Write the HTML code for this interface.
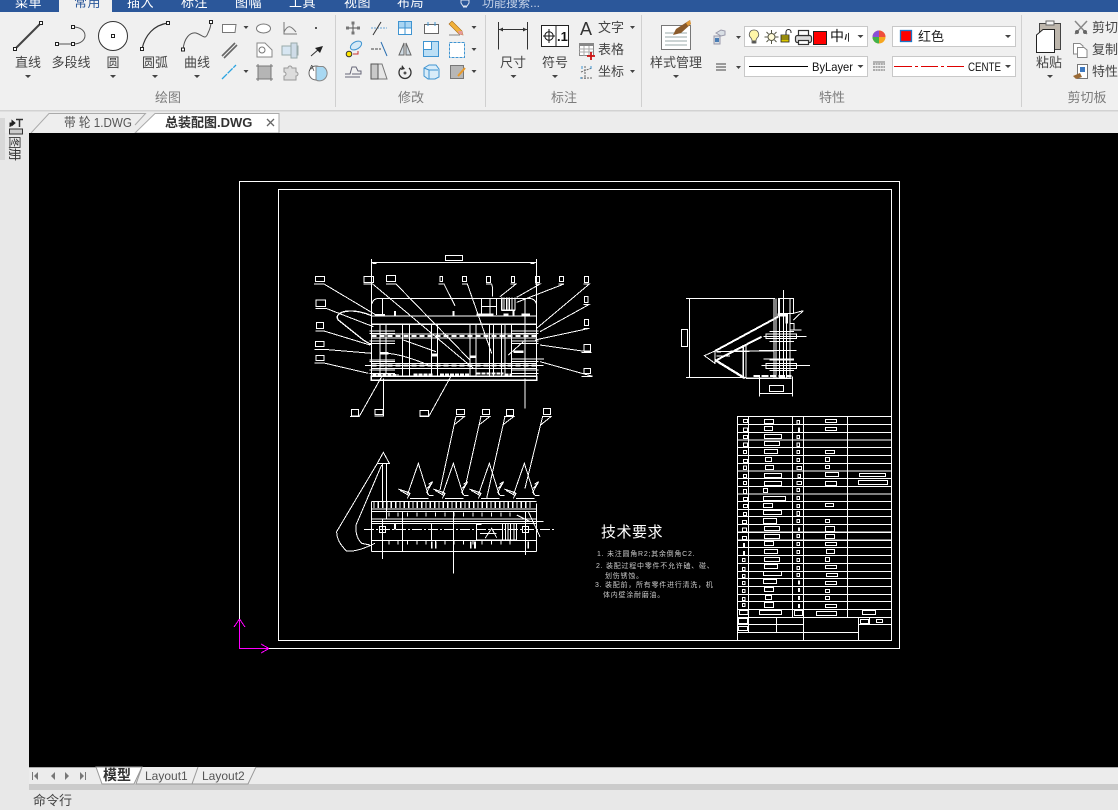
<!DOCTYPE html>
<html lang="zh">
<head>
<meta charset="utf-8">
<title>CAD</title>
<style>
html,body{margin:0;padding:0;width:1118px;height:810px;overflow:hidden;background:#f0f0f0}
svg{display:block}
text{font-family:"Liberation Sans","Noto Sans CJK SC",sans-serif;font-size:13px;fill:#444}
.m{text-anchor:middle}
.g{fill:#7c7c7c}
.w{fill:#fff}
.a{fill:#444;stroke:none}
.cad{fill:none;stroke:#fff;stroke-width:3;shape-rendering:crispEdges}
.ic{fill:none;stroke:#555;stroke-width:1}
.lb{fill:#fff;stroke:#666;stroke-width:1}
.tr text{font-size:7px;fill:#c9c9c9;letter-spacing:.75px}
</style>
</head>
<body>
<svg width="1118" height="810" viewBox="0 0 1118 810" xmlns="http://www.w3.org/2000/svg">
<defs>
<g id="cone"><path d="M262 270L295 175L325 270M235 252L270 265L262 280M235 252L265 262M270 280H325M338 230L320 262L328 272H340M325 238L338 230M240 256L268 272M322 250L334 236"/></g>
</defs>
<!-- backgrounds -->
<rect width="1118" height="810" fill="#e8e8e8"/>
<rect y="12" width="1118" height="98" fill="#f0f0f0"/>
<rect y="110" width="1118" height="1.500" fill="#d2d2d2"/>
<rect width="1118" height="12" fill="#2b579a"/>
<rect x="59" width="53" height="13" fill="#f0f0f0"/>
<!-- top tabs -->
<g font-size="13">
<text class="w" x="15" y="7" letter-spacing=".5">菜单</text>
<text x="74" y="7" letter-spacing=".5" style="fill:#2b579a">常用</text>
<text class="w" x="127" y="7" letter-spacing=".5">插入</text>
<text class="w" x="181" y="7" letter-spacing=".5">标注</text>
<text class="w" x="235" y="7" letter-spacing=".5">图幅</text>
<text class="w" x="289" y="7" letter-spacing=".5">工具</text>
<text class="w" x="344" y="7" letter-spacing=".5">视图</text>
<text class="w" x="397" y="7" letter-spacing=".5">布局</text>
<text x="482" y="7" style="fill:#c6d3e8;font-size:12px">功能搜索...</text>
</g>
<path d="M461 0h8v3l-2 3h-4l-2-3zM463 7h4" fill="none" stroke="#dfe6f2"/>
<!-- separators -->
<path d="M335.500 15V107M485.500 15V107M641.500 15V107M1021.500 15V107" stroke="#d0d0d0" fill="none"/>
<!-- group labels -->
<text class="m g" x="168" y="102">绘图</text>
<text class="m g" x="411" y="102">修改</text>
<text class="m g" x="564" y="102">标注</text>
<text class="m g" x="832" y="102">特性</text>
<text class="m g" x="1087" y="102">剪切板</text>
<!-- draw big labels -->
<text class="m" x="28" y="67">直线</text>
<text class="m" x="71" y="67">多段线</text>
<text class="m" x="113" y="67">圆</text>
<text class="m" x="155" y="67">圆弧</text>
<text class="m" x="197" y="67">曲线</text>
<path class="a" d="M25 75h6l-3 3zM110 75h6l-3 3zM152 75h6l-3 3zM194 75h6l-3 3zM243.500 26h5l-2.500 3zM243.500 70h5l-2.500 3z"/>
<!-- line -->
<path d="M15 49L41 23" stroke="#444" stroke-width="2" fill="none"/>
<path class="lb" style="stroke:#222" d="M13.500 47.500h3v3h-3zM39.500 21.500h3v3h-3z"/>
<!-- polyline -->
<path d="M57 44H73C89 44 89 27 73 27" fill="none" stroke="#555"/>
<path class="lb" style="stroke:#222" d="M55.500 42.500h3v3h-3zM71.500 42.500h3v3h-3zM71.500 25.500h3v3h-3z"/>
<!-- circle -->
<circle cx="113" cy="36" r="14.500" fill="#fff" stroke="#333"/>
<path class="lb" style="stroke:#222" d="M111.500 34.500h3v3h-3z"/>
<!-- arc -->
<path d="M142 49C145 35 154 25 168 23" fill="none" stroke="#333" stroke-width="1.200"/>
<path class="lb" style="stroke:#222" d="M140.500 47.500h3v3h-3zM166.500 21.500h3v3h-3z"/>
<!-- spline -->
<path d="M183 50C184 38 190 32 196 33C203 35 205 41 208 33C210 29 211 26 211 22" fill="none" stroke="#555"/>
<path class="lb" style="stroke:#222" d="M181.500 48h3v3h-3zM209.500 20.500h3v3h-3z"/>
<!-- draw small icons -->
<g class="ic">
<path d="M222.500 24.500H236L235 32.500H222.500Z" fill="#fff" stroke="#777"/>
<ellipse cx="263.500" cy="28.500" rx="7" ry="4.500" fill="#fff" stroke="#777"/>
<path d="M284 22V34H297M284 32C288 24 291 26 296 32" stroke="#777"/>
<path d="M222 56L235 43M224 58L237 45" stroke="#666" stroke-width="1.600"/>
<path d="M257 43H265L272 50V57H257Z" fill="#fff" stroke="#888"/><circle cx="262" cy="50" r="3" stroke="#777"/>
<path d="M282 46H298V55H282Z" fill="#d7e6f2" stroke="#9aa"/><path d="M291 43H297V58H291Z" fill="#cfdce8" stroke="#9aa"/>
<path d="M222 79L236 65" stroke="#2aa3e0" stroke-width="1.300" stroke-dasharray="7 1"/>
<rect x="258" y="66" width="13" height="13" fill="#b5b5b5" stroke="#777"/><path d="M256 66h17M256 79h17M258 64v17M271 64v17" stroke="#777"/>
<path d="M284 68h4a2 2 0 0 1 4 0h4v4a2 2 0 0 1 0 4v4h-12v-4a2 2 0 0 0 0-4z" fill="#dcdcdc" stroke="#999"/>
<circle cx="316" cy="73" r="7" fill="#fff" stroke="#666"/><path d="M316 73V66.500H323A7 7 0 0 1 316 80Z" fill="#a8d8f2" stroke="#888"/>
</g>
<rect x="315" y="27" width="2" height="2" fill="#555"/>
<path d="M311 56L319 49" stroke="#333"/><path d="M323 46L315 48L320 53Z" fill="#222"/>
<text x="309" y="71" style="font-size:8px">A</text>
<!-- modify icons -->
<g class="ic">
<path d="M353 22V34M347 28H359" stroke="#555"/><path d="M351.500 21.500h3v3h-3zM351.500 31.500h3v3h-3zM346 26.500h3v3h-3zM357 26.500h3v3h-3z" fill="#777" stroke="none"/>
<path d="M371 28H387" stroke="#6aa6d6" stroke-dasharray="2 1"/><path d="M373 35L381 22" stroke="#333"/>
<rect x="398.500" y="21.500" width="13" height="13" stroke="#3f94d1" fill="#fff"/><path d="M405 21V35M398 28H412" stroke="#3f94d1"/><path d="M399 22h5.500v5.500h-5.500zM405.500 22h5.500v5.500h-5.500z" fill="#a9d5f2" stroke="none"/>
<rect x="424.500" y="24.500" width="14" height="9" fill="#fff" stroke="#666"/><path d="M428 22v4M435 22v4" stroke="#3f94d1"/>
<path d="M449 35H460" stroke="#888"/>
<path d="M352 44a5 3 -30 1 1 8 3a5 3 -30 1 1 -8 -3z" fill="#d5e9f6" stroke="#3f94d1"/>
<circle cx="349" cy="54" r="2.800" fill="#ffe600" stroke="#333"/><path d="M353 54h5v-3" stroke="#c33"/>
<path d="M371 49H381" stroke="#444" stroke-dasharray="3 1"/><path d="M381 42L387 56" stroke="#2a6fb0"/>
<path d="M404 43L399 55H404ZM406 43L411 55H406Z" fill="#cfdbe4" stroke="#666"/>
<rect x="423.500" y="41.500" width="15" height="15" fill="#bcdff5" stroke="#3f94d1"/><rect x="423.500" y="41.500" width="8" height="8" fill="#fff" stroke="#3f94d1"/>
<rect x="449.500" y="42.500" width="15" height="15" fill="#fff" stroke="#3f94d1" stroke-dasharray="3 1"/>
<path d="M345 77H360M345 74H350L352 67H356L358 71H361V74H352" stroke="#667"/>
<path d="M371 64H382L387 79H371Z" fill="#e6e6e6" stroke="#777"/><path d="M371 64H378V79H371Z" fill="#c9c9c9" stroke="#555"/>
<path d="M401 68A6 6 0 1 0 409 68" stroke="#333" stroke-width="1.300"/><path d="M402 65L405 69L401 70Z" fill="#333" stroke="none"/><circle cx="405" cy="73" r="1" fill="#333"/>
<path d="M424 68L429 65H436L439 69V77L435 79H428L424 76Z" fill="#d8ecf9" stroke="#3f94d1"/><path d="M429 70H438M429 70V79M424 68L429 70" stroke="#3f94d1"/>
<rect x="450.500" y="65.500" width="13" height="13" fill="#b7b7b7" stroke="#777"/>
</g>
<path d="M449 24L452 21L462 31L463 35L459 34Z" fill="#f2b23a" stroke="#a86a1c" stroke-width=".6"/>
<path d="M458 31L462 31L463 35L459 34Z" fill="#e89a9a"/>
<path d="M458 76L465 68" stroke="#e89a2a" stroke-width="2"/>
<path class="a" d="M471.500 26h5l-2.500 3zM471.500 48h5l-2.500 3zM471.500 70h5l-2.500 3zM630 26h5l-2.500 3zM630 70h5l-2.500 3zM673 75h6l-3 3zM736 36h5l-2.500 3zM736 66h5l-2.500 3zM510.500 75h6l-3 3zM552 75h6l-3 3zM1047 75h6l-3 3z"/>
<!-- annotate -->
<path d="M498.500 22V49.500M527.500 22V49.500M499 29.500H527" stroke="#333" fill="none"/>
<path d="M499 29.500l4-2v4zM527 29.500l-4-2v4z" fill="#333"/>
<text class="m" x="513" y="67">尺寸</text>
<rect x="541.500" y="25.500" width="27" height="21" fill="#fff" stroke="#222"/>
<path d="M556 25.500V46.500" stroke="#222"/>
<circle cx="549" cy="36" r="4.200" fill="none" stroke="#111"/><path d="M549 29V43M543 36H555" stroke="#111"/>
<text x="557" y="41" style="font-size:13px;font-weight:bold;fill:#111">.1</text>
<text class="m" x="555" y="67">符号</text>
<text x="580" y="35" style="font-size:18px;fill:#333">A</text>
<text x="598" y="32">文字</text>
<rect x="579.500" y="43.500" width="14" height="12" fill="#fff" stroke="#888"/><rect x="579.500" y="43" width="14" height="3" fill="#888"/>
<path d="M579 49H593M579 52H593M584 46V56M589 46V56" stroke="#aaa"/>
<path d="M591 52V60M587 56H595" stroke="#c11" stroke-width="1.800"/>
<text x="598" y="54">表格</text>
<path d="M581 78H593M585 66V79M581 72L592 68" stroke="#666" stroke-dasharray="2 1" fill="none"/><path d="M582 66v3M591 66v3M581 77v2" stroke="#3f94d1"/>
<text x="598" y="76">坐标</text>
<!-- style mgr -->
<rect x="661.500" y="25.500" width="29" height="24" fill="#fff" stroke="#777"/>
<path d="M665 33H687M665 37H687M665 41H687M665 45H687" stroke="#9aa"/>
<path d="M690 20L691 24L681 33L673 35L676 29Z" fill="#8a5a2a"/><path d="M686 23L690 20L691 24L688 26Z" fill="#e09a3a"/>
<text class="m" x="676" y="67">样式管理</text>
<!-- props -->
<path d="M714 36h6v8h-6zM716 33l5-3 4 1v4l-4 1z" fill="#d9dfe5" stroke="#99a"/><rect x="715" y="38" width="4" height="4" fill="#4a7db5"/>
<path d="M716 64H726M716 67H726M716 70H726" stroke="#444"/>
<rect x="744.500" y="26.500" width="123" height="20" fill="#fff" stroke="#c8c8c8"/>
<rect x="744.500" y="56.500" width="123" height="20" fill="#fff" stroke="#c8c8c8"/>
<rect x="892.500" y="26.500" width="123" height="20" fill="#fff" stroke="#c8c8c8"/>
<rect x="892.500" y="56.500" width="123" height="20" fill="#fff" stroke="#c8c8c8"/>
<path d="M754 30a4.500 4.500 0 0 0-3 8l1 2v3h4v-3l1-2a4.500 4.500 0 0 0-3-8z" fill="#fff6a8" stroke="#555" stroke-width=".8"/>
<rect x="752.500" y="40.500" width="3" height="3" fill="#555"/>
<circle cx="771.500" cy="37" r="3.500" fill="#fffbd8" stroke="#554"/>
<path d="M771.500 30v3M771.500 41v3M764.500 37h3M775.500 37h3M766.500 32l2 2M774.500 40l2 2M776.500 32l-2 2M768.500 40l-2 2" stroke="#554" fill="none"/>
<rect x="781" y="35" width="8" height="7" fill="#dcc800" stroke="#222" stroke-width=".8"/>
<path d="M781 37h8M781 39h8" stroke="#222" stroke-width=".8"/>
<path d="M786 35v-3a2.500 2.500 0 0 1 5 0v1" fill="none" stroke="#222"/>
<rect x="795.500" y="35.500" width="16" height="7" rx="2" fill="#ddd" stroke="#333" stroke-width="1.200"/>
<rect x="798.500" y="30.500" width="10" height="5" fill="#fff" stroke="#333" stroke-width="1.200"/>
<rect x="798.500" y="40.500" width="10" height="4" fill="#fff" stroke="#333" stroke-width="1.200"/>
<rect x="813.500" y="31.500" width="13" height="13" fill="#f00" stroke="#222"/>
<svg x="829" y="26" width="20" height="21"><text x="1" y="15" style="font-size:14px;fill:#111">中心</text></svg>
<path class="a" d="M857.500 35h6l-3 3zM857.500 65h6l-3 3zM1005 35h6l-3 3zM1005 65h6l-3 3z"/>
<path d="M749 66.500H808" stroke="#000"/>
<text x="812" y="71" textLength="41" lengthAdjust="spacingAndGlyphs" style="font-size:12px;fill:#111">ByLayer</text>
<circle cx="879" cy="37" r="6.500" fill="#f6a61f"/>
<path d="M879 37L879 30.500A6.500 6.500 0 0 1 885.500 37Z" fill="#ef4d3c"/>
<path d="M879 37L872.500 37A6.500 6.500 0 0 1 879 30.500Z" fill="#8a4fd8"/>
<path d="M879 37L872.500 37A6.500 6.500 0 0 0 879 43.500Z" fill="#42b24a"/>
<path d="M873 64H885M873 67H885M873 70H885" stroke="#666" stroke-dasharray="2 .6" fill="none"/><path d="M873 62H885" stroke="#777"/>
<rect x="900.500" y="30.500" width="11" height="11" fill="#f00" stroke="#1b74c7" stroke-width="1.300"/>
<text x="918" y="41" style="font-size:13px;letter-spacing:0;fill:#222">红色</text>
<path d="M894 66.500H912M915 66.500h3M921 66.500H938M941 66.500h3M947 66.500H964" stroke="#d00" fill="none"/>
<svg x="966" y="57" width="35" height="19"><text x="2" y="14" textLength="40" lengthAdjust="spacingAndGlyphs" style="font-size:12px;fill:#111">CENTER</text></svg>
<!-- paste -->
<rect x="1039.500" y="23.500" width="21" height="26" fill="#bdb6ac" stroke="#444"/>
<rect x="1046" y="21" width="8" height="4" fill="#f4f4f4" stroke="#666"/>
<path d="M1036.500 35L1043 29.500H1054.500V52.500H1036.500Z" fill="#fff" stroke="#222"/>
<text class="m" x="1049" y="67">粘贴</text>
<path d="M1075 21L1087 34M1087 21L1075 34" stroke="#888" stroke-width="1.500"/><circle cx="1077" cy="32" r="2" fill="#666"/><circle cx="1085" cy="32" r="2" fill="#666"/>
<text x="1092" y="32">剪切</text>
<path d="M1073.500 43.500H1080L1083 46V54H1073.500Z" fill="#fff" stroke="#888"/><path d="M1077.500 47.500H1084L1087 50V57.500H1077.500Z" fill="#fff" stroke="#888"/>
<text x="1092" y="54">复制</text>
<rect x="1077.500" y="64.500" width="10" height="14" fill="#fff" stroke="#777"/><rect x="1080" y="67" width="5" height="5" fill="#3e79c0"/><path d="M1073 76L1080 73L1082 77L1076 79Z" fill="#9a6a35"/>
<text x="1092" y="76">特性</text>
<!-- doc tabs -->
<rect y="111.500" width="1118" height="21.500" fill="#ececec"/>
<path d="M31 133L49 113.500H145.500L135 125" fill="#eeeeee" stroke="#aaa"/>
<path d="M135 133L155 113.500H279V133Z" fill="#fff" stroke="#aaa"/>
<text x="64" y="127" textLength="68" lengthAdjust="spacingAndGlyphs" style="fill:#555">带 轮 1.DWG</text>
<text x="165" y="127" style="font-weight:bold;fill:#333">总装配图.DWG</text>
<path d="M267 119L274 126M274 119L267 126" stroke="#666" stroke-width="1.300"/>
<!-- sidebar -->
<rect x="0" y="118" width="5" height="42" fill="#d8d8d8"/>
<path d="M10 127v-4h4M12 120.500l3 2.500-3 2.500z" fill="#222" stroke="#222"/><path d="M16 119.500h7M19.500 120v7" stroke="#333" stroke-width="1.500" fill="none"/>
<rect x="9.500" y="129" width="13" height="5" fill="#ccc" stroke="#333"/>
<text transform="translate(10 136) rotate(90)" style="font-size:13px;fill:#333">图</text>
<text transform="translate(10 148) rotate(90)" style="font-size:13px;fill:#333">册</text>
<!-- canvas -->
<rect x="29" y="133" width="1089" height="634" fill="#000"/>
<g fill="none" stroke="#fff" shape-rendering="crispEdges">
<path d="M239.500 620V181.500H899.500V648.500H268"/>
<rect x="278.500" y="189.500" width="613" height="451"/>
</g>
<g stroke="#f0f" fill="none" shape-rendering="crispEdges">
<path d="M239.500 620V648.500H268"/>
<path d="M239.500 619L234 627M239.500 619L245 627M269 648.500L261 644M269 648.500L261 653"/>
</g>
<!-- main view -->
<g transform="translate(300 245) scale(.33333)" class="cad">
<path d="M214 42V402M710 42V402M214 52H710M218 55h12M692 55h12"/>
<rect x="436" y="31" width="52" height="15"/>
<path d="M46 95h28v15h-28zM192 95h28v18h-28zM259 91h28v18h-28zM420 95h8v15h-8zM487 95h12v15h-12zM559 95h13v17h-13zM634 95h10v17h-10zM706 95h13v17h-13zM778 95h13v15h-13zM853 95h13v18h-13zM853 155h11v18h-11zM853 224h12v18h-12zM852 298h20v20h-20zM852 370h20v15h-20zM48 165h29v20h-29zM49 232h22v18h-22zM46 290h26v14h-26zM48 331h24v16h-24zM154 493h22v20h-22zM225 493h24v15h-24zM360 497h26v16h-26zM469 493h24v15h-24zM547 493h22v15h-22zM619 493h22v18h-22zM731 490h21v18h-21z"/>
<path d="M42 117H72L228 210M190 117H218L520 370M258 117H288L510 345M415 117H432L465 182M486 117H502L575 325M558 117H575L578 130V155M632 117H648L600 155M705 117H720L650 157M775 117H792L650 172M850 117H868L710 250M850 178H868L720 260M850 250H868L705 285M845 322H875L720 300M845 394H878L720 350M46 190H78L220 245M46 258H72L210 300M44 313H72L215 325M44 354H72L205 385M150 514H178L245 395M223 513H251V400M358 515H386L455 390M468 514H494L462 540M540 514H570L537 540M612 514H642L608 540M728 514H754L722 540"/>
<path d="M214 185Q216 160 238 160H688Q708 162 710 182M248 160V212M675 160V240"/>
<path d="M214 213H710M214 238H710" stroke-width="4"/>
<path d="M225 210h30M530 209h50M610 209h15M665 209h25M285 198v14M461 198v14M640 198v14" stroke-width="6"/>
<path d="M545 162V210M570 162V210M590 162V210M545 185H590"/>
<path d="M605 157V196M612 157V196M620 157V196M628 157V196M636 157V196M645 157V196M605 196H645" stroke-width="4"/>
<path d="M214 267H710M214 279H710M214 355H710M214 370H710"/>
<path d="M214 273H710M214 362H710" stroke-width="6" stroke-dasharray="16 8"/>
<path d="M208 258H285M208 265H285M208 288H285M208 295H285M208 345H285M208 350H285M208 375H285M208 385H285M636 258H716M636 265H716M636 288H716M636 295H716M636 342H732M636 350H716M636 375H716M636 385H716"/>
<path d="M240 238V394M258 238V394M308 238V394M328 238V394M394 238V394M412 238V394M510 238V394M528 238V394M568 238V394M580 238V394M605 238V394M615 238V394M635 238V394M675 238V394"/>
<path d="M218 390H295M340 388h60M420 388h90M530 386h80M614 388h20" stroke-width="6" stroke-dasharray="12 3"/>
<rect x="214" y="394" width="496" height="12" stroke-width="4"/>
<path d="M215 212Q160 190 125 202Q105 212 115 225L190 285L215 300" stroke-width="4"/>
<path d="M310 285L408 320M255 325Q300 325 385 360M675 400V490M625 330L670 290M250 400V450M195 362H730"/>
<path d="M240 325h25M640 320h30M395 330h18M510 335h18" stroke-width="8"/>
</g>
<!-- bottom view -->
<g transform="translate(320 405) scale(.33333)" class="cad">
<path d="M408 34L360 255M483 34L437 240M555 34L500 280M668 34L615 250"/>
<path d="M172 175L190 142L208 175ZM188 175V290M200 175V340"/>
<path d="M172 175L50 380Q50 410 80 438Q110 442 165 415M185 180L108 360Q105 395 125 415L150 420"/>
<use href="#cone"/><use href="#cone" x="105"/><use href="#cone" x="213"/><use href="#cone" x="318"/>
<path d="M155 290H650M155 312H650M155 320H650M155 342H650M155 350H650M155 355H650M155 407H650M155 440H650M155 290V440M247 320V440M400 320V505M650 295V440M335 355V407"/>
<path d="M160 300H640" stroke-width="18" stroke-dasharray="4 9"/>
<path d="M132 373H705" stroke-dasharray="30 6 6 6"/>
<path d="M187 340V462M617 320V450"/>
<rect x="178" y="365" width="18" height="18"/><rect x="607" y="365" width="18" height="18"/>
<path d="M205 328H590" stroke-width="12" stroke-dasharray="3 25"/>
<path d="M205 413H590" stroke-width="12" stroke-dasharray="3 25"/>
<rect x="470" y="355" width="120" height="50"/>
<path d="M470 358h15M548 356V404M556 356V404M564 356V404M572 356V404M582 356V404M495 400L515 370L530 398M480 385H530M590 330L630 350M625 320L660 395M650 350H670"/>
<path d="M335 410V430M347 410V430M452 410V430M465 410V430M625 410V430" stroke-width="5"/>
<path d="M225 357V373" stroke-width="5"/>
</g>
<!-- side view -->
<g transform="translate(670 280) scale(.33333)" class="cad">
<path d="M48 55H315M48 292H230M58 55V292"/>
<rect x="34" y="148" width="18" height="52"/>
<path d="M103 227L135 213V250Z"/>
<path d="M135 213L325 110M140 240L275 170" stroke-width="6"/>
<path d="M135 240L225 295" stroke-width="7"/>
<path d="M140 228H180M140 215L310 212M220 195V295M228 195V295M228 295H365" stroke-width="4"/>
<path d="M312 55V295M318 55V295M328 55V295M340 30V295M350 100V295M360 55V295"/>
<rect x="325" y="55" width="45" height="45"/>
<path d="M322 105H350V130" stroke-width="8"/>
<path d="M370 100L400 92L370 120M360 130H372V150H392M360 150H395"/>
<rect x="288" y="162" width="92" height="14"/><rect x="288" y="250" width="92" height="16"/>
<path d="M298 155H372M298 185H372M298 240H372M298 272H372M280 170H410M275 256H420M280 237H372M300 212H380"/>
<path d="M268 290V350M367 290V350M268 340H367"/>
<rect x="298" y="316" width="42" height="18"/>
<path d="M250 288H365" stroke-width="7" stroke-dasharray="20 5"/>
<path d="M330 290h15" stroke-width="8"/>
</g>
<!-- table -->
<g transform="translate(730 410) scale(.33333)" class="cad">
<path d="M22 19H484V390H22ZM56 19V367M187 19V367M220 19V367M352 19V367"/>
<path d="M22 43H484M22 67H484M22 90H484M22 113H484M22 136H484M22 160H484M22 183H484M22 206H484M22 229H484M22 252H484M22 275H484M22 298H484M22 320H484M22 344H484M22 366H484M22 390H484"/>
</g>
<g transform="translate(730 525) scale(.33333)" class="cad">
<path d="M22 22H484M22 46H484M22 67H484M22 91H484M22 115H484M22 139H484M22 161H484M22 185H484M22 208H484M22 230H484M22 253H484M22 277H484M22 346H484"/>
<path d="M22 0V346M484 0V346M56 0V323M187 0V277M220 0V346M352 0V277M139 277V323M385 277V346M418 277V298"/>
<path d="M22 298H220M385 298H484M22 323H385"/>
<path d="M28 256h26v13h-26zM88 256h67v13h-67zM193 256h25v16h-25zM259 259h61v13h-61zM397 256h40v13h-40zM25 280h28v16h-28zM25 304h28v13h-28zM391 283h25v13h-25zM439 283h19v10h-19z"/>
<path d="M37 9h13v11h-13zM103 4h46v13h-46zM286 4h28v16h-28zM37 34h13v10h-13zM103 28h46v13h-46zM201 28h8v10h-8zM286 28h28v13h-28zM103 49h28v13h-28zM201 52h8v10h-8zM286 52h34v10h-34zM103 73h40v13h-40zM201 76h8v10h-8zM289 73h25v13h-25zM37 100h8v10h-8zM103 97h46v13h-46zM201 100h8v10h-8zM286 97h13v13h-13zM37 127h8v10h-8zM103 118h40v13h-40zM201 124h8v10h-8zM286 121h34v10h-34zM37 148h8v10h-8zM100 139h55v13h-55zM201 145h8v10h-8zM289 145h34v10h-34zM37 169h8v10h-8zM100 163h40v13h-40zM286 169h34v10h-34zM37 193h8v10h-8zM103 187h28v13h-28zM286 193h13v10h-13zM37 217h8v10h-8zM106 211h19v13h-19zM286 214h13v10h-13zM37 235h8v10h-8zM103 232h28v16h-28zM286 238h34v10h-34z"/>
<path d="M42 54v12M42 78v12M207 7v11M207 167v12M207 189v12M207 213v12M207 237v12" stroke-width="5"/>
</g>
<g transform="translate(730 410) scale(.33333)" class="cad">
<path d="M40 28h13v10h-13zM103 28h28v13h-28zM201 31h8v11h-8zM286 28h34v10h-34zM40 54h12v11h-12zM103 49h25v13h-25zM286 52h34v10h-34zM40 76h13v10h-13zM103 73h52v13h-52zM201 76h8v10h-8zM40 99h13v10h-13zM103 94h46v13h-46zM201 99h8v10h-8zM40 121h10v10h-10zM103 118h40v13h-40zM201 121h8v10h-8zM286 121h28v9h-28zM40 148h13v10h-13zM106 142h19v13h-19zM201 145h8v10h-8zM286 142h13v13h-13zM40 168h10v11h-10zM106 166h25v13h-25zM201 169h13v10h-13zM286 166h13v10h-13zM40 193h10v10h-10zM103 190h52v13h-52zM204 193h8v10h-8zM286 187h40v13h-40zM388 190h79v10h-79zM40 214h10v10h-10zM103 214h52v13h-52zM201 214h13v10h-13zM286 214h34v13h-34zM385 211h88v13h-88zM40 238h10v13h-10zM100 235h13v13h-13zM201 235h8v10h-8zM40 262h13v10h-13zM100 259h67v13h-67zM201 259h8v10h-8zM40 283h13v10h-13zM100 280h28v13h-28zM201 283h8v10h-8zM286 280h25v9h-25zM40 307h10v10h-10zM100 301h55v13h-55zM201 304h8v13h-8zM37 331h13v10h-13zM100 325h40v16h-40zM201 328h8v10h-8zM286 328h13v10h-13z"/>
<path d="M207 52v14" stroke-width="5"/>
</g>
<!-- tech requirements -->
<text x="601" y="537" style="font-size:15px;fill:#fff;letter-spacing:.5px">技术要求</text>
<g class="tr">
<text x="597" y="556">1. 未注圆角R2;其余倒角C2.</text>
<text x="596" y="568">2. 装配过程中零件不允许磕、碰、</text>
<text x="605" y="578">划伤锈蚀。</text>
<text x="595" y="587">3. 装配前，所有零件进行清洗，机</text>
<text x="603" y="597">体内壁涂耐磨油。</text>
</g>
<!-- bottom tabs -->
<rect x="29" y="767" width="1089" height="18" fill="#ececec"/>
<rect x="29" y="767" width="1089" height="1" fill="#aaa"/>
<rect x="29" y="784" width="1089" height="6" fill="#cbcbcb"/>
<path class="a" style="fill:#777" d="M32 772h1v8h-1zM38 772v8l-4-4zM55 772v8l-4-4zM65 772l4 4-4 4zM80 772l4 4-4 4zM85 772h1v8h-1z"/>
<path d="M96 767L102 784H134L142 767Z" fill="#fff" stroke="#999"/>
<text x="103" y="780" style="font-size:14px;font-weight:bold;fill:#333">模型</text>
<path d="M142 767L136 784H192L198 767M198 767L192 784H248L256 767" fill="#eee" stroke="#999"/>
<text x="145" y="780" style="font-size:12px;fill:#555">Layout1</text>
<text x="202" y="780" style="font-size:12px;fill:#555">Layout2</text>
<text x="33" y="805">命令行</text>
</svg>
</body>
</html>
